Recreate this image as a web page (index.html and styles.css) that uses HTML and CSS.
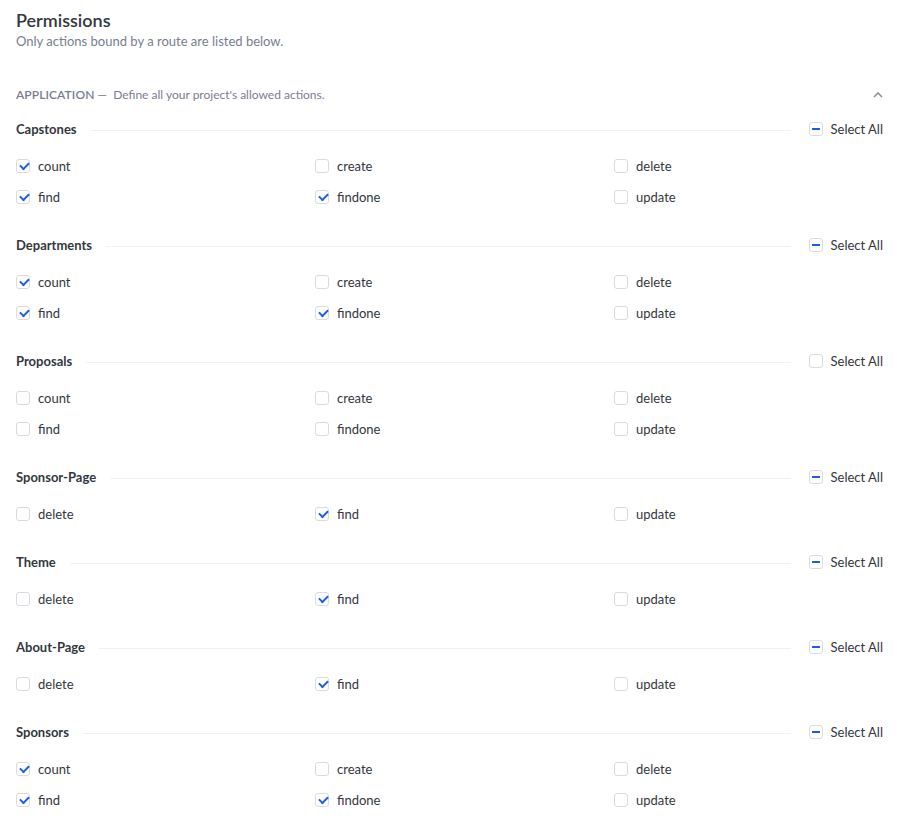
FILE: index.html
```html
<!DOCTYPE html>
<html>
<head>
<meta charset="utf-8">
<link rel="stylesheet" href="styles.css">
</head>
<body>
<div class="page">
  <h1 class="title">Permissions</h1>
  <p class="subtitle">Only actions bound by a route are listed below.</p>

  <div class="app-head">
    <span class="app-name">APPLICATION</span><span class="app-desc">&nbsp;—&nbsp; Define all your project's allowed actions.</span>
    <svg class="chev" width="10" height="6" viewBox="0 0 10 6"><path d="M1 5 L5 1 L9 5" fill="none" stroke="#8a8f9c" stroke-width="1.6"/></svg>
  </div>

  <div class="section">
    <div class="sec-head"><span class="sec-title">Capstones</span><span class="sec-line"></span><label class="sel"><span class="box minus"></span>Select All</label></div>
    <div class="grid">
      <label class="item"><span class="box on"></span>count</label>
      <label class="item"><span class="box"></span>create</label>
      <label class="item"><span class="box"></span>delete</label>
      <label class="item"><span class="box on"></span>find</label>
      <label class="item"><span class="box on"></span>findone</label>
      <label class="item"><span class="box"></span>update</label>
    </div>
  </div>

  <div class="section">
    <div class="sec-head"><span class="sec-title">Departments</span><span class="sec-line"></span><label class="sel"><span class="box minus"></span>Select All</label></div>
    <div class="grid">
      <label class="item"><span class="box on"></span>count</label>
      <label class="item"><span class="box"></span>create</label>
      <label class="item"><span class="box"></span>delete</label>
      <label class="item"><span class="box on"></span>find</label>
      <label class="item"><span class="box on"></span>findone</label>
      <label class="item"><span class="box"></span>update</label>
    </div>
  </div>

  <div class="section">
    <div class="sec-head"><span class="sec-title">Proposals</span><span class="sec-line"></span><label class="sel"><span class="box"></span>Select All</label></div>
    <div class="grid">
      <label class="item"><span class="box"></span>count</label>
      <label class="item"><span class="box"></span>create</label>
      <label class="item"><span class="box"></span>delete</label>
      <label class="item"><span class="box"></span>find</label>
      <label class="item"><span class="box"></span>findone</label>
      <label class="item"><span class="box"></span>update</label>
    </div>
  </div>

  <div class="section">
    <div class="sec-head"><span class="sec-title">Sponsor-Page</span><span class="sec-line"></span><label class="sel"><span class="box minus"></span>Select All</label></div>
    <div class="grid">
      <label class="item"><span class="box"></span>delete</label>
      <label class="item"><span class="box on"></span>find</label>
      <label class="item"><span class="box"></span>update</label>
    </div>
  </div>

  <div class="section">
    <div class="sec-head"><span class="sec-title">Theme</span><span class="sec-line"></span><label class="sel"><span class="box minus"></span>Select All</label></div>
    <div class="grid">
      <label class="item"><span class="box"></span>delete</label>
      <label class="item"><span class="box on"></span>find</label>
      <label class="item"><span class="box"></span>update</label>
    </div>
  </div>

  <div class="section">
    <div class="sec-head"><span class="sec-title">About-Page</span><span class="sec-line"></span><label class="sel"><span class="box minus"></span>Select All</label></div>
    <div class="grid">
      <label class="item"><span class="box"></span>delete</label>
      <label class="item"><span class="box on"></span>find</label>
      <label class="item"><span class="box"></span>update</label>
    </div>
  </div>

  <div class="section">
    <div class="sec-head"><span class="sec-title">Sponsors</span><span class="sec-line"></span><label class="sel"><span class="box minus"></span>Select All</label></div>
    <div class="grid">
      <label class="item"><span class="box on"></span>count</label>
      <label class="item"><span class="box"></span>create</label>
      <label class="item"><span class="box"></span>delete</label>
      <label class="item"><span class="box on"></span>find</label>
      <label class="item"><span class="box on"></span>findone</label>
      <label class="item"><span class="box"></span>update</label>
    </div>
  </div>
</div>
</body>
</html>
```

FILE: styles.css
```css
* { box-sizing: border-box; }
html, body { margin: 0; padding: 0; background: #ffffff; }
body {
  font-family: Lato, "Open Sans", sans-serif;
  color: #333740;
  overflow: hidden;
}
.page {
  padding: 9px 16px 0 16px;
  width: 899px;
}
.title {
  margin: 0;
  font-size: 18px;
  line-height: 22px;
  font-weight: 600;
  color: #333740;
}
.subtitle {
  margin: 2px 0 0 0;
  font-size: 13px;
  line-height: 16px;
  color: #787e8f;
}
.app-head {
  margin-top: 38px;
  display: flex;
  align-items: center;
  height: 16px;
  font-size: 12px;
  line-height: 16px;
  color: #787e8f;
}
.app-name {
  font-weight: 600;
  letter-spacing: 0.1px;
}
.app-desc {
  font-size: 12px;
}
.chev {
  margin-left: auto;
  margin-right: 0;
}
.section {
  margin-top: 15px;
}
.section + .section {
  margin-top: 22px;
}
.sec-head {
  display: flex;
  align-items: center;
  height: 22px;
}
.sec-title {
  font-size: 13px;
  font-weight: 700;
  line-height: 22px;
}
.sec-line {
  flex: 1;
  height: 1px;
  background: #f0f1f3;
  margin: 2px 18px 0 14px;
}
.sel {
  display: flex;
  align-items: center;
  font-size: 13px;
  line-height: 22px;
  color: #333740;
}
.grid {
  margin-top: 10px;
  display: grid;
  grid-template-columns: 299px 299px 1fr;
  grid-auto-rows: 31px;
}
.item {
  display: flex;
  align-items: center;
  font-size: 13px;
  color: #333740;
}
.box {
  width: 14px;
  height: 14px;
  border: 1px solid #d9dbe0;
  border-radius: 3px;
  margin-right: 8px;
  position: relative;
  flex: none;
  background: #fff;
}
.box.on::after {
  content: "";
  position: absolute;
  left: 2.5px;
  top: 2px;
  width: 7px;
  height: 4px;
  border-left: 2px solid #1c5de7;
  border-bottom: 2px solid #1c5de7;
  transform: rotate(-45deg);
}
.box.minus::after {
  content: "";
  position: absolute;
  left: 2px;
  top: 5px;
  width: 8px;
  height: 2px;
  background: #1c5de7;
}
```
